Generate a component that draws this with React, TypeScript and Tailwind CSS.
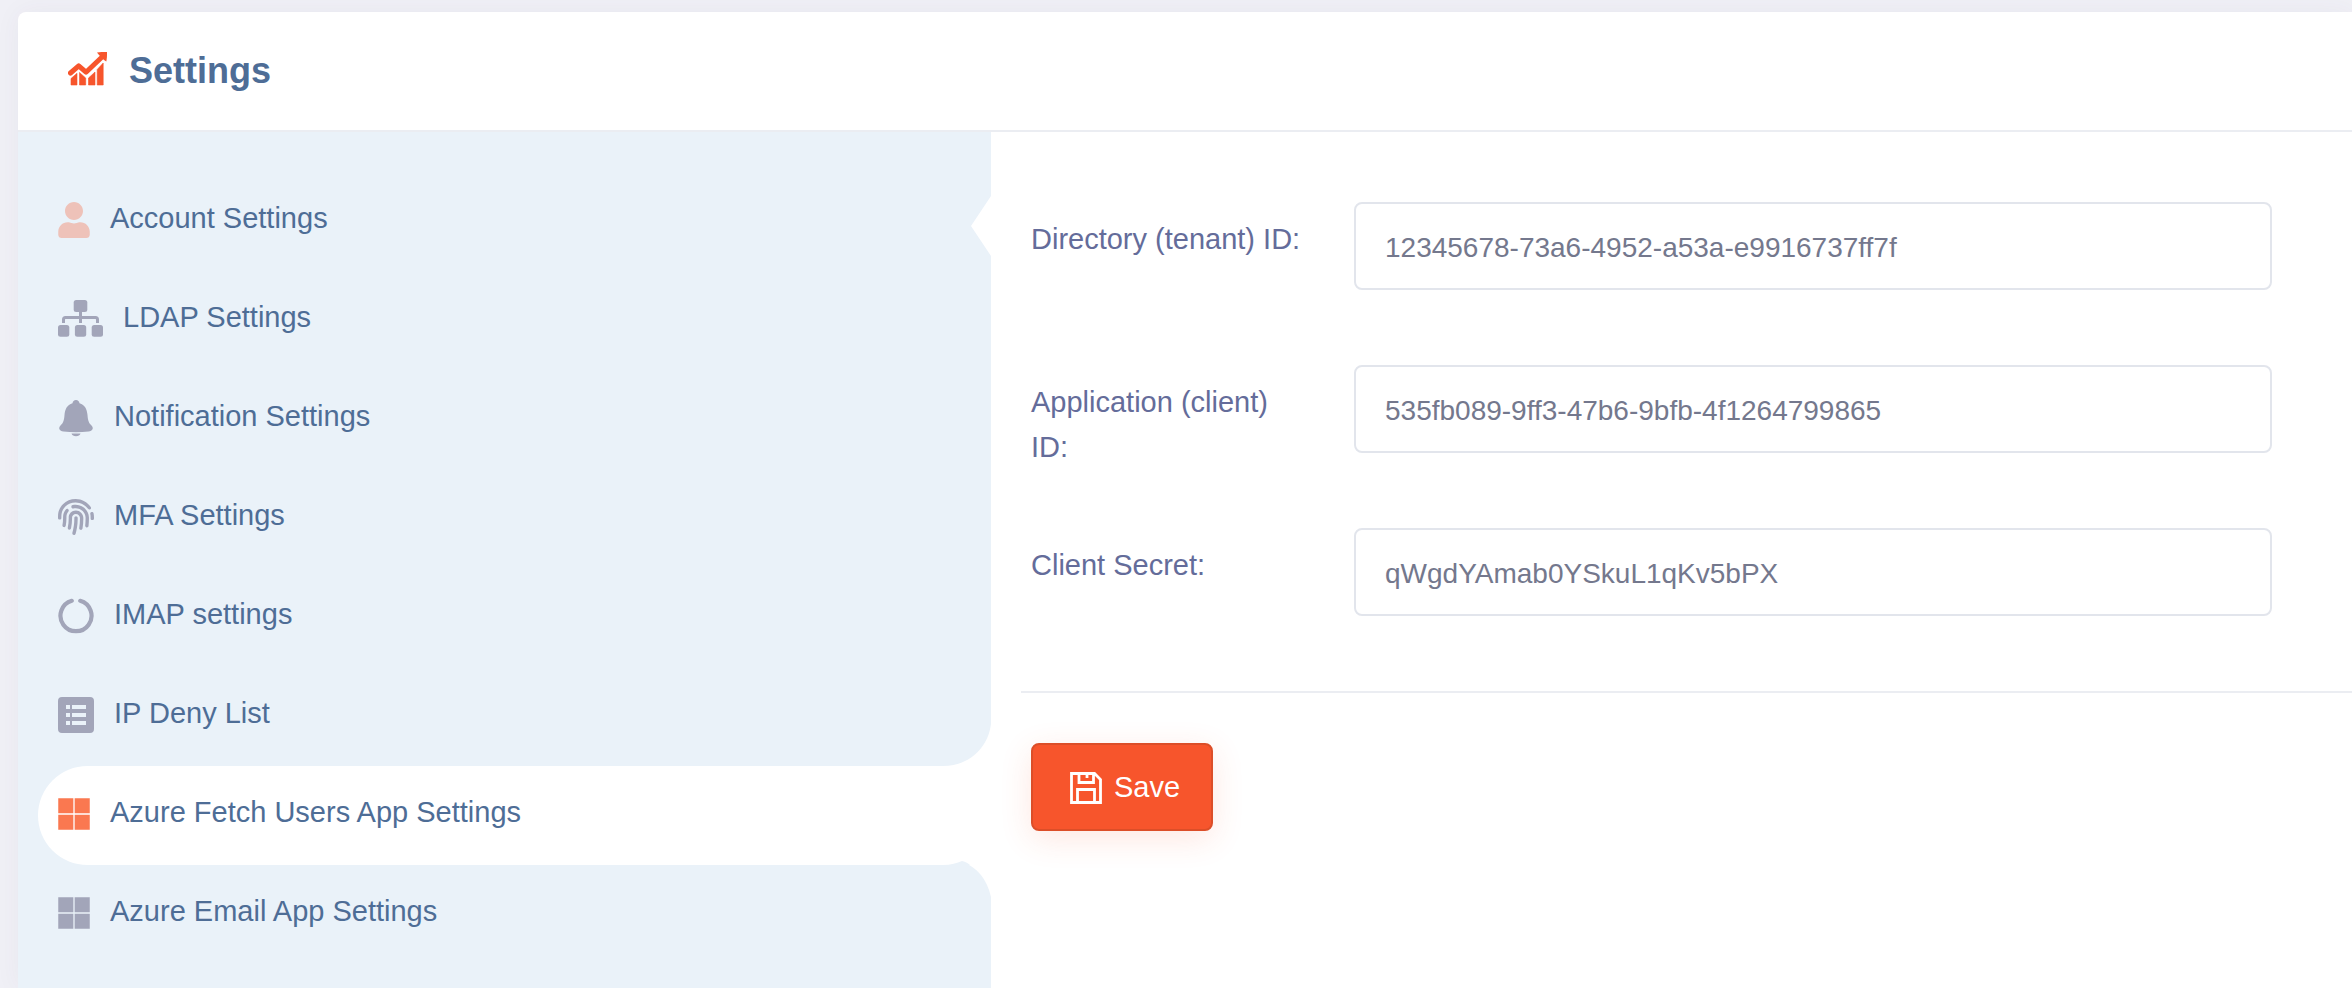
import { useState } from "react";
import type { ReactNode } from "react";
import clsx from "clsx";
import { FaFingerprint, FaMicrosoft, FaUser } from "react-icons/fa";

function ChartIcon() {
  return (
    <svg viewBox="0 0 39 34" className="h-[34px] w-[39px]" fill="currentColor" aria-hidden="true">
      <path d="M2.500 21 10.700 13.800l7.300 6.400L33 6" fill="none" stroke="currentColor" strokeWidth="5" strokeLinecap="round" strokeLinejoin="round" />
      <path d="M29 .5C32 0 35 0 39 0c0 3.500 0 6.500-.7 9.500L36 8l-5-5z" />
      <path d="M3 26.500 9 21.300V33H3zM11.500 20.500 17.700 26v7h-6.200zM20.500 26l6.500-6v13h-6.500zM29.200 17.500l6-6.500v22h-6z" stroke="currentColor" strokeWidth=".6" strokeLinejoin="round" />
    </svg>
  );
}

function SitemapIcon() {
  return (
    <svg viewBox="0 0 45 37" className="h-[37px] w-[45px]" fill="currentColor" aria-hidden="true">
      <rect x="15.700" width="13.600" height="12" rx="2.500" />
      <rect y="25" width="11.300" height="11.700" rx="2.500" />
      <rect x="16.900" y="25" width="11.300" height="11.700" rx="2.500" />
      <rect x="33.700" y="25" width="11.300" height="11.700" rx="2.500" />
      <path d="M22.500 11v12M5.500 23v-3.500a2 2 0 0 1 2-2h30a2 2 0 0 1 2 2V23" fill="none" stroke="currentColor" strokeWidth="3" />
    </svg>
  );
}

function BellIcon() {
  return (
    <svg viewBox="0 0 36 38" className="h-[38px] w-[36px]" fill="currentColor" aria-hidden="true">
      <path d="M18 1c2 0 3.300 1.300 3.500 3.200C27 6 29 10 29.500 16c.4 6 1.500 8 4 10.500 2.500 2.800 1.200 5.500-3 6-8 1-17 1-25 0-4.200-.5-5.500-3.200-3-6 2.500-2.500 3.600-4.500 4-10.500C7 10 9 6 14.500 4.200 14.700 2.300 16 1 18 1z" />
      <path d="M13.500 34.500h9c-.5 1.800-2.300 2.700-4.500 2.700s-4-.9-4.500-2.700z" />
    </svg>
  );
}

function RingIcon() {
  return (
    <svg viewBox="0 0 36 36" className="size-9" fill="none" stroke="currentColor" strokeWidth="4.200" strokeLinecap="round" aria-hidden="true">
      <path d="M13.800 2.800a15.500 15.500 0 1 0 8.400 0" />
    </svg>
  );
}

function ListIcon() {
  return (
    <svg viewBox="0 0 36 36" className="size-9" fill="currentColor" aria-hidden="true">
      <path fillRule="evenodd" d="M4 0h28a4 4 0 0 1 4 4v28a4 4 0 0 1-4 4H4a4 4 0 0 1-4-4V4a4 4 0 0 1 4-4zM8 8v4h4V8zM14 8v4h14V8zM8 16v4h4v-4zM14 16v4h14v-4zM8 24v4h4v-4zM14 24v4h14v-4z" />
    </svg>
  );
}

function SaveIcon() {
  return (
    <svg viewBox="0 0 32 32" className="size-8" fill="none" stroke="currentColor" strokeWidth="2.800" aria-hidden="true">
      <path d="M1.500 1.500h23l6 6v23h-29zM9 1.500v9h14.500v-9M17 1.500V6M7.500 30.500v-13h17v13" />
    </svg>
  );
}

type Item = {
  label: string;
  icon: ReactNode;
  highlighted?: boolean;
};

const items: Item[] = [
  { label: "Account Settings", icon: <FaUser className="h-9 w-8" />, highlighted: true },
  { label: "LDAP Settings", icon: <SitemapIcon /> },
  { label: "Notification Settings", icon: <BellIcon /> },
  { label: "MFA Settings", icon: <FaFingerprint className="size-9" /> },
  { label: "IMAP settings", icon: <RingIcon /> },
  { label: "IP Deny List", icon: <ListIcon /> },
  { label: "Azure Fetch Users App Settings", icon: <FaMicrosoft className="h-9 w-8" /> },
  { label: "Azure Email App Settings", icon: <FaMicrosoft className="h-9 w-8" /> },
];

const fields = [
  { id: "tenant", label: "Directory (tenant) ID:", value: "12345678-73a6-4952-a53a-e9916737ff7f" },
  { id: "client", label: "Application (client) ID:", value: "535fb089-9ff3-47b6-9bfb-4f1264799865" },
  { id: "secret", label: "Client Secret:", value: "qWgdYAmab0YSkuL1qKv5bPX" },
];

function Sidebar() {
  const [active, setActive] = useState("Azure Fetch Users App Settings");

  return (
    <nav className="relative w-[973px] max-w-[42%] shrink-0 bg-[#eaf2f9] pt-10 pb-6 pl-5">
      <svg viewBox="0 0 20 60" className="absolute top-16 right-0 h-[60px] w-5 fill-white" aria-hidden="true">
        <path d="M20 0 0 30l20 30z" />
      </svg>
      {items.map(({ label, icon, highlighted }) => {
        const isActive = label === active;
        return (
          <a
            key={label}
            href="#"
            onClick={() => setActive(label)}
            className={clsx(
              "relative flex h-[99px] items-center gap-5 rounded-l-full pb-1 pl-5 text-[29px] leading-[44px] text-[#4e6d96]",
              isActive && "bg-white"
            )}
          >
            <span className={clsx(isActive ? "text-[#fa7850]" : highlighted ? "text-[#eec2b9]" : "text-[#a2a5b9]")}>{icon}</span>
            <span className="pb-1">{label}</span>
            {/* rounded shoulders joining the active tab to the content */}
            {isActive && (
              <>
                <svg viewBox="0 0 48 42" className="absolute right-0 bottom-full h-[42px] w-12 fill-white" aria-hidden="true">
                  <path d="M48 0v42H0C26 42 45 24 48 0z" />
                </svg>
                <svg viewBox="0 0 48 36" className="absolute top-full right-0 -mt-1 h-9 w-12 fill-white" aria-hidden="true">
                  <path d="M18 0c16 6 26 18 30 36V0z" />
                </svg>
                <svg viewBox="0 0 48 5" className="absolute right-0 bottom-0 h-[5px] w-12 fill-[#eaf2f9]" aria-hidden="true">
                  <path d="M0 5c8 0 14-2 19-4 4 1 6 2 8 4z" />
                </svg>
              </>
            )}
          </a>
        );
      })}
    </nav>
  );
}

export default function App() {
  return (
    <div className="min-h-screen bg-[#f0f0f6] pt-3 pl-[18px] font-['Liberation_Sans',Arial,sans-serif]">
      <div className="flex min-h-[calc(100vh-12px)] flex-col overflow-hidden rounded-tl-lg bg-white shadow-[0_0_26px_rgba(82,63,105,0.05)]">
        <header className="flex h-[120px] items-center gap-[22px] border-b-2 border-[#ebedf2] pl-[50px]">
          <span className="pb-1 text-[#f7552c]">
            <ChartIcon />
          </span>
          <h1 className="text-[36px] leading-[44px] font-bold text-[#4e6d96]">Settings</h1>
        </header>

        <div className="flex grow">
          <Sidebar />
          <form className="min-w-0 grow pt-[70px] pl-[30px]" onSubmit={(e) => e.preventDefault()}>
            <div className="flex flex-col gap-[75px] pr-20 pl-[10px]">
              {fields.map(({ id, label, value }) => (
                <div key={id} className="flex h-[88px] items-start">
                  <label htmlFor={id} className="w-[323px] shrink-0 pt-[15px] pr-12 text-[29px] leading-[45px] text-[#646c9a]">
                    {label}
                  </label>
                  <input
                    id={id}
                    type="text"
                    defaultValue={value}
                    className="h-[88px] min-w-0 grow rounded-lg border-2 border-[#e2e5ec] bg-white px-[29px] pt-[3px] text-[28px] text-[#74788d] outline-none"
                  />
                </div>
              ))}
            </div>

            <div className="mt-[75px] border-t-2 border-[#ebedf2] pt-[50px] pl-[10px]">
              <button
                type="submit"
                className="flex h-[88px] items-center gap-3 rounded-lg border-2 border-[#dc4e28] bg-[#f7552c] pt-[2px] pr-[31px] pl-[37px] text-[29px] text-white shadow-[0_8px_32px_rgba(249,86,43,0.14)]"
              >
                <SaveIcon />
                Save
              </button>
            </div>
          </form>
        </div>
      </div>
    </div>
  );
}
